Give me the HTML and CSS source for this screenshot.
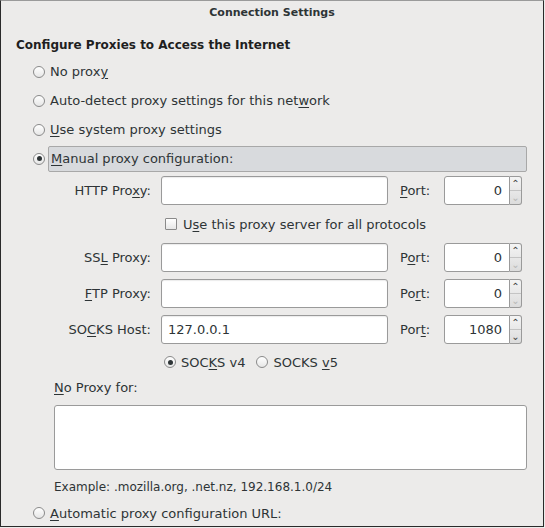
FILE: index.html
```html
<!DOCTYPE html>
<html>
<head>
<meta charset="utf-8">
<link rel="stylesheet" href="styles.css">
</head>
<body>
<div class="window">
  <div class="titlebar">Connection Settings</div>
  <div class="content">
    <h1 class="heading">Configure Proxies to Access the Internet</h1>
    <div class="options">
      <div class="opt"><span class="radio"></span><span>No prox<u>y</u></span></div>
      <div class="opt"><span class="radio"></span><span>Auto-detect proxy settings for this net<u>w</u>ork</span></div>
      <div class="opt"><span class="radio"></span><span><u>U</u>se system proxy settings</span></div>
      <div class="opt"><span class="radio checked"></span><span class="focus"><u>M</u>anual proxy configuration:</span></div>
    </div>
    <div class="grid">
      <label class="lbl">HTTP Pro<u>x</u>y:</label>
      <div class="field"></div>
      <label class="plbl"><u>P</u>ort:</label>
      <div class="spin"><div class="spinval">0</div><div class="spinbtns"><span class="up">&#8963;</span><span class="down dis">&#8964;</span></div></div>

      <div class="checkrow"><span class="check"></span><span>U<u>s</u>e this proxy server for all protocols</span></div>

      <label class="lbl">SS<u>L</u> Proxy:</label>
      <div class="field"></div>
      <label class="plbl">P<u>o</u>rt:</label>
      <div class="spin"><div class="spinval">0</div><div class="spinbtns"><span class="up">&#8963;</span><span class="down dis">&#8964;</span></div></div>

      <label class="lbl"><u>F</u>TP Proxy:</label>
      <div class="field"></div>
      <label class="plbl">Po<u>r</u>t:</label>
      <div class="spin"><div class="spinval">0</div><div class="spinbtns"><span class="up">&#8963;</span><span class="down dis">&#8964;</span></div></div>

      <label class="lbl">SO<u>C</u>KS Host:</label>
      <div class="field">127.0.0.1</div>
      <label class="plbl">Por<u>t</u>:</label>
      <div class="spin"><div class="spinval">1080</div><div class="spinbtns"><span class="up">&#8963;</span><span class="down">&#8964;</span></div></div>

      <div class="socksrow">
        <div class="opt2"><span class="radio checked"></span><span>SOC<u>K</u>S v4</span></div>
        <div class="opt2"><span class="radio"></span><span>SOCKS <u>v</u>5</span></div>
      </div>
    </div>
    <div class="noproxy">
      <div class="nplbl"><u>N</u>o Proxy for:</div>
      <div class="textarea"></div>
      <div class="example">Example: .mozilla.org, .net.nz, 192.168.1.0/24</div>
    </div>
    <div class="opt last"><span class="radio"></span><span><u>A</u>utomatic proxy configuration URL:</span></div>
  </div>
</div>
</body>
</html>
```

FILE: styles.css
```css
html, body {
  margin: 0;
  padding: 0;
  background: #ecebea;
}
body {
  font-family: "DejaVu Sans", "Noto Sans", sans-serif;
  font-size: 13px;
  color: #2e3436;
}
u { text-decoration: underline; text-underline-offset: 2px; }
.window {
  width: 544px;
  height: 527px;
  box-sizing: border-box;
  border: 1px solid #2a2a2a;
  border-top-color: #9a9a9a;
  background: #ecebea;
  overflow: hidden;
}
.titlebar {
  height: 24px;
  line-height: 23px;
  text-align: center;
  font-weight: bold;
  font-size: 11px;
  color: #2e3436;
}
.content {
  padding-left: 15px;
}
.heading {
  margin: 8px 0 0 0;
  height: 24px;
  line-height: 24px;
  font-size: 12px;
  font-weight: bold;
  color: #1f1f1f;
}
.options {
  padding-left: 17px;
  margin-top: 0;
}
.opt {
  display: flex;
  align-items: center;
  height: 29px;
  gap: 5px;
}
.radio {
  width: 10px;
  height: 10px;
  border: 1px solid #8a8a8a;
  border-radius: 50%;
  background: linear-gradient(#ffffff, #e6e6e6);
  flex: none;
  position: relative;
  box-sizing: content-box;
}
.radio.checked::after {
  content: "";
  position: absolute;
  left: 2.5px;
  top: 2.5px;
  width: 5px;
  height: 5px;
  border-radius: 50%;
  background: #2e3436;
}
.focus {
  flex: 1;
  height: 24px;
  line-height: 24px;
  margin-left: -2px;
  margin-right: 16px;
  padding-left: 2px;
  border: 1px solid #a8a8a8;
  border-radius: 2px;
  background: #d8dadd;
}
.grid {
  margin-left: 33px;
  margin-top: 3px;
  display: grid;
  grid-template-columns: 112px 227px 56px 78px;
  grid-template-rows: 29px 24px 29px 29px 29px 22px;
  row-gap: 7px;
}
.lbl {
  text-align: right;
  padding-right: 10px;
  align-self: center;
  white-space: nowrap;
}
.plbl {
  padding-left: 12px;
  align-self: center;
}
.field {
  box-sizing: border-box;
  background: #fff;
  border: 1px solid #9a9a9a;
  border-radius: 3px;
  box-shadow: inset 0 1px 1px rgba(0,0,0,0.08);
  padding-left: 6px;
  line-height: 27px;
}
.spin {
  display: flex;
}
.spinval {
  flex: 1;
  box-sizing: border-box;
  background: #fff;
  border: 1px solid #9a9a9a;
  border-radius: 3px 0 0 3px;
  text-align: right;
  padding-right: 7px;
  line-height: 27px;
}
.spinbtns {
  width: 12px;
  box-sizing: border-box;
  display: flex;
  flex-direction: column;
  border: 1px solid #9a9a9a;
  border-left: none;
  border-radius: 0 3px 3px 0;
  background: linear-gradient(#f4f4f4, #dcdcdc);
}
.spinbtns span {
  flex: 1;
  font-size: 10px;
  line-height: 13px;
  text-align: center;
  color: #444;
  overflow: hidden;
}
.spinbtns .up { border-bottom: 1px solid #c4c4c4; }
.spinbtns .dis { color: #b8b8b8; }
.checkrow {
  grid-column: 2 / 5;
  display: flex;
  align-items: center;
  gap: 6px;
  padding-left: 4px;
}
.check {
  width: 10px;
  height: 10px;
  border: 1px solid #8a8a8a;
  border-radius: 1px;
  background: linear-gradient(#ffffff, #e6e6e6);
}
.socksrow {
  grid-column: 2 / 5;
  display: flex;
  align-items: center;
  gap: 11px;
  padding-left: 3px;
}
.opt2 {
  display: flex;
  align-items: center;
  gap: 5px;
}
.noproxy {
  margin-left: 38px;
  margin-right: 16px;
  margin-top: 4px;
}
.nplbl {
  height: 22px;
  line-height: 22px;
}
.textarea {
  margin-top: 6px;
  height: 65px;
  box-sizing: border-box;
  background: #fff;
  border: 1px solid #9a9a9a;
  border-radius: 3px;
}
.example {
  height: 34px;
  line-height: 34px;
  font-size: 12px;
}
.opt.last {
  padding-left: 17px;
  height: 18px;
}
```
